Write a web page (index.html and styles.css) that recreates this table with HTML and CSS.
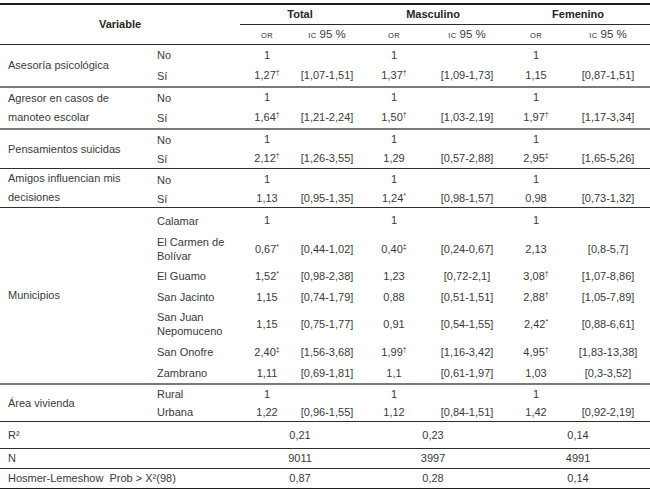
FILE: index.html
```html
<!DOCTYPE html>
<html lang="es">
<head>
<meta charset="utf-8">
<title>Tabla</title>
<link rel="stylesheet" href="styles.css">
</head>
<body>
<table class="tbl">
  <colgroup>
    <col class="c-var"><col class="c-sub">
    <col class="c-or1"><col class="c-ic1">
    <col class="c-or2"><col class="c-ic2">
    <col class="c-or3"><col class="c-ic3">
  </colgroup>
  <thead>
    <tr class="h1">
      <th rowspan="2" colspan="2" class="th-var">Variable</th>
      <th colspan="2" class="grp">Total</th>
      <th colspan="2" class="grp">Masculino</th>
      <th colspan="2" class="grp">Femenino</th>
    </tr>
    <tr class="h2">
      <th class="sub"><span class="sc">OR</span></th>
      <th class="sub"><span class="sc">IC</span> 95 %</th>
      <th class="sub"><span class="sc">OR</span></th>
      <th class="sub"><span class="sc">IC</span> 95 %</th>
      <th class="sub"><span class="sc">OR</span></th>
      <th class="sub"><span class="sc">IC</span> 95 %</th>
    </tr>
  </thead>
  <tbody>
    <tr class="r20">
      <td rowspan="2" class="lab sep-gray">Asesoría psicológica</td>
      <td class="opt">No</td><td>1</td><td></td><td>1</td><td></td><td>1</td><td></td>
    </tr>
    <tr class="r23 sep-gray">
      <td class="opt">Sí</td><td>1,27<sup>†</sup></td><td>[1,07-1,51]</td><td>1,37<sup>†</sup></td><td>[1,09-1,73]</td><td>1,15</td><td>[0,87-1,51]</td>
    </tr>
    <tr class="r19">
      <td rowspan="2" class="lab sep-gray">Agresor en casos de manoteo escolar</td>
      <td class="opt">No</td><td>1</td><td></td><td>1</td><td></td><td>1</td><td></td>
    </tr>
    <tr class="r23 sep-gray">
      <td class="opt">Sí</td><td>1,64<sup>†</sup></td><td>[1,21-2,24]</td><td>1,50<sup>†</sup></td><td>[1,03-2,19]</td><td>1,97<sup>†</sup></td><td>[1,17-3,34]</td>
    </tr>
    <tr class="r19">
      <td rowspan="2" class="lab sep-dark">Pensamientos suicidas</td>
      <td class="opt">No</td><td>1</td><td></td><td>1</td><td></td><td>1</td><td></td>
    </tr>
    <tr class="r20 sep-dark">
      <td class="opt">Sí</td><td>2,12<sup>†</sup></td><td>[1,26-3,55]</td><td>1,29</td><td>[0,57-2,88]</td><td>2,95<sup>‡</sup></td><td>[1,65-5,26]</td>
    </tr>
    <tr class="r21">
      <td rowspan="2" class="lab sep-dark">Amigos influencian mis decisiones</td>
      <td class="opt">No</td><td>1</td><td></td><td>1</td><td></td><td>1</td><td></td>
    </tr>
    <tr class="r17 sep-dark">
      <td class="opt">Sí</td><td>1,13</td><td>[0,95-1,35]</td><td>1,24<sup>*</sup></td><td>[0,98-1,57]</td><td>0,98</td><td>[0,73-1,32]</td>
    </tr>
    <tr class="r25">
      <td rowspan="7" class="lab sep-gray">Municipios</td>
      <td class="opt">Calamar</td><td>1</td><td></td><td>1</td><td></td><td>1</td><td></td>
    </tr>
    <tr class="r32">
      <td class="opt">El Carmen de Bolívar</td><td>0,67<sup>*</sup></td><td>[0,44-1,02]</td><td>0,40<sup>‡</sup></td><td>[0,24-0,67]</td><td>2,13</td><td>[0,8-5,7]</td>
    </tr>
    <tr class="r22">
      <td class="opt">El Guamo</td><td>1,52<sup>*</sup></td><td>[0,98-2,38]</td><td>1,23</td><td>[0,72-2,1]</td><td>3,08<sup>†</sup></td><td>[1,07-8,86]</td>
    </tr>
    <tr class="r20">
      <td class="opt">San Jacinto</td><td>1,15</td><td>[0,74-1,79]</td><td>0,88</td><td>[0,51-1,51]</td><td>2,88<sup>†</sup></td><td>[1,05-7,89]</td>
    </tr>
    <tr class="r34">
      <td class="opt">San Juan Nepomuceno</td><td>1,15</td><td>[0,75-1,77]</td><td>0,91</td><td>[0,54-1,55]</td><td>2,42<sup>*</sup></td><td>[0,88-6,61]</td>
    </tr>
    <tr class="r22">
      <td class="opt">San Onofre</td><td>2,40<sup>‡</sup></td><td>[1,56-3,68]</td><td>1,99<sup>†</sup></td><td>[1,16-3,42]</td><td>4,95<sup>†</sup></td><td>[1,83-13,38]</td>
    </tr>
    <tr class="r22 sep-gray">
      <td class="opt">Zambrano</td><td>1,11</td><td>[0,69-1,81]</td><td>1,1</td><td>[0,61-1,97]</td><td>1,03</td><td>[0,3-3,52]</td>
    </tr>
    <tr class="r18">
      <td rowspan="2" class="lab sep-dark">Área vivienda</td>
      <td class="opt">Rural</td><td>1</td><td></td><td>1</td><td></td><td>1</td><td></td>
    </tr>
    <tr class="r19 sep-dark">
      <td class="opt">Urbana</td><td>1,22</td><td>[0,96-1,55]</td><td>1,12</td><td>[0,84-1,51]</td><td>1,42</td><td>[0,92-2,19]</td>
    </tr>
    <tr class="r27 sep-dark">
      <td colspan="2" class="lab">R²</td><td colspan="2">0,21</td><td colspan="2">0,23</td><td colspan="2">0,14</td>
    </tr>
    <tr class="r18 sep-dark">
      <td colspan="2" class="lab">N</td><td colspan="2">9011</td><td colspan="2">3997</td><td colspan="2">4991</td>
    </tr>
    <tr class="r20 sep-end">
      <td colspan="2" class="lab">Hosmer-Lemeshow&nbsp; Prob &gt; X²(98)</td><td colspan="2">0,87</td><td colspan="2">0,28</td><td colspan="2">0,14</td>
    </tr>
  </tbody>
</table>
</body>
</html>
```

FILE: styles.css
```css
html, body {
  margin: 0;
  padding: 0;
  background: #ffffff;
}

body {
  font-family: "Liberation Sans", Arial, sans-serif;
  font-size: 11px;
  color: #3a3a3a;
  padding-top: 3px;
}

.tbl {
  width: 650px;
  table-layout: fixed;
  border-collapse: separate;
  border-spacing: 0;
}

.c-var { width: 150px; }
.c-sub { width: 90px; }
.c-or1 { width: 54px; }
.c-ic1 { width: 66px; }
.c-or2 { width: 68px; }
.c-ic2 { width: 78px; }
.c-or3 { width: 60px; }
.c-ic3 { width: 84px; }

.tbl th,
.tbl td {
  padding: 0;
  line-height: 13px;
  text-align: center;
  vertical-align: middle;
  white-space: nowrap;
}

.tbl th {
  font-weight: bold;
  color: #262626;
}

.h1 th {
  border-top: 2px solid #1e1e1e;
  height: 19px;
}

.h1 .grp {
  border-bottom: 1px solid #2a2a2a;
}

.th-var {
  border-bottom: 1px solid #2a2a2a;
  font-size: 11px;
}

.h2 th {
  height: 19px;
  border-bottom: 1px solid #2a2a2a;
  font-weight: normal;
  color: #3a3a3a;
  font-size: 11.5px;
}

.sc {
  font-size: 7.5px;
  letter-spacing: 0.3px;
  color: #2a2a2a;
}

.tbl sup {
  font-size: 7px;
  line-height: 0;
  vertical-align: 4px;
}

.tbl td.lab {
  text-align: left;
  padding-left: 8px;
  line-height: 19px;
  white-space: normal;
}

.tbl td.opt {
  text-align: left;
  padding-left: 7px;
  line-height: 14px;
  white-space: normal;
}

.sep-gray td,
td.sep-gray {
  border-bottom: 2px solid #7a7a7a;
}

.sep-dark td,
td.sep-dark {
  border-bottom: 1px solid #2e2e2e;
}

.sep-end td {
  border-bottom: 2px solid #1e1e1e;
}

.r17 { height: 18px; }
.r18 { height: 18px; }
.r19 { height: 19px; }
.r20 { height: 20px; }
.r21 { height: 21px; }
.r22 { height: 22px; }
.r23 { height: 23px; }
.r25 { height: 25px; }
.r27 { height: 27px; }
.r32 { height: 32px; }
.r34 { height: 34px; }
```
